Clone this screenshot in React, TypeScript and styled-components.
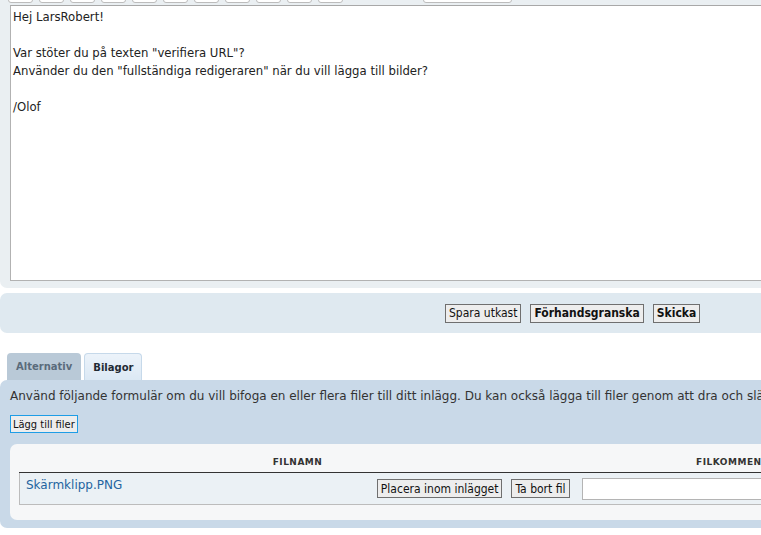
import styled, { createGlobalStyle } from "styled-components";

const GlobalStyle = createGlobalStyle`
  html, body {
    margin: 0;
    padding: 0;
    background: #ffffff;
    overflow: hidden;
  }
  body {
    font-family: "DejaVu Sans", Verdana, sans-serif;
    color: #333;
  }
`;

const Page = styled.div`
  width: 820px;
  display: flex;
  flex-direction: column;
`;

const EditorPanel = styled.div`
  background: #eaeff2;
  border-radius: 0 0 7px 7px;
  padding: 0 0 7px 10px;
  display: flex;
  flex-direction: column;
`;

const Toolbar = styled.div`
  display: flex;
  gap: 6px;
  height: 5px;
  align-items: flex-end;
`;

const ToolButton = styled.div<{ $w?: number; $gap?: number }>`
  width: ${(p) => p.$w ?? 23}px;
  height: 20px;
  margin-bottom: 2px;
  margin-left: ${(p) => p.$gap ?? 0}px;
  background: #ffffff;
  border: 1px solid #bcbcbc;
  border-radius: 3px;
  flex-shrink: 0;
`;

const EditorText = styled.textarea`
  display: block;
  width: 780px;
  height: 276px;
  box-sizing: border-box;
  margin: 0;
  padding: 2px 2px;
  border: 1px solid #b2b2b2;
  border-top-color: #a8a8a8;
  background: #fff;
  resize: none;
  outline: none;
  font-family: "DejaVu Sans Condensed", "DejaVu Sans", sans-serif;
  font-stretch: condensed;
  font-size: 13px;
  line-height: 18px;
  color: #222;
`;

const ActionBar = styled.div`
  margin-top: 5px;
  height: 40px;
  background: #dfe9f0;
  border-radius: 7px;
  display: flex;
  align-items: center;
  padding-left: 445px;
  gap: 9px;
`;

const FormButton = styled.button<{ $bold?: boolean; $small?: boolean }>`
  height: ${(p) => (p.$small ? 18 : 19)}px;
  padding: 0 ${(p) => (p.$small ? 2 : 3)}px;
  margin: 0;
  background: #ededed;
  border: 1px solid ${(p) => (p.$small ? "#1e9de6" : "#6f6f6f")};
  border-radius: 0;
  font-family: "DejaVu Sans Condensed", "DejaVu Sans", sans-serif;
  font-stretch: condensed;
  font-size: ${(p) => (p.$small ? 11 : 12)}px;
  font-weight: ${(p) => (p.$bold ? 700 : 400)};
  color: #111;
  line-height: 1;
  cursor: pointer;
  white-space: nowrap;
`;

const Tabs = styled.div`
  margin-top: 20px;
  display: flex;
  gap: 3px;
  padding-left: 7px;
  align-items: flex-end;
`;

const Tab = styled.div<{ $active?: boolean }>`
  height: ${(p) => (p.$active ? 28 : 27)}px;
  box-sizing: border-box;
  padding: 0 ${(p) => (p.$active ? 8 : 9)}px;
  display: flex;
  align-items: center;
  border-radius: 4px 4px 0 0;
  font-size: 10px;
  font-weight: 700;
  color: ${(p) => (p.$active ? "#1f2a33" : "#5a6b7b")};
  background: ${(p) =>
    p.$active ? "linear-gradient(#ecf3fa, #dbe8f4)" : "#b9c9d7"};
  border: ${(p) => (p.$active ? "1px solid #c6d9ea" : "none")};
  border-bottom: none;
  margin-bottom: ${(p) => (p.$active ? -1 : 0)}px;
`;

const AttachPanel = styled.div`
  background: #c9d9e8;
  border-radius: 7px;
  padding: 8px 0 8px 10px;
  display: flex;
  flex-direction: column;
`;

const Intro = styled.p`
  margin: 0;
  font-size: 12px;
  line-height: 16px;
  color: #333;
  white-space: nowrap;
`;

const AddRow = styled.div`
  margin-top: 11px;
  display: flex;
`;

const FilesBox = styled.div`
  margin-top: 11px;
  background: #f6f7f8;
  border-radius: 7px;
  padding: 8px 0 15px 9px;
`;

const FileTable = styled.table`
  border-collapse: collapse;
  width: 884px;
  font-size: 12px;
`;

const HeadCell = styled.th<{ $w?: number }>`
  width: ${(p) => (p.$w ? `${p.$w}px` : "auto")};
  height: 20px;
  padding: 0;
  font-size: 9px;
  font-weight: 700;
  letter-spacing: 0.5px;
  color: #333;
  text-align: center;
  border-bottom: 1px solid #333;
`;

const FileRow = styled.tr`
  background: #ebf1f5;
  height: 32px;
  border-bottom: 1px solid #bcbcbc;
  border-left: 1px solid #bcbcbc;
`;

const NameCell = styled.td`
  padding: 0 6px;
  vertical-align: middle;
`;

const NameInner = styled.div`
  display: flex;
  align-items: center;
  justify-content: space-between;
`;

const FileLink = styled.a`
  color: #2364a0;
  text-decoration: none;
  font-size: 12px;
  margin-top: -7px;
`;

const ButtonGroup = styled.div`
  display: flex;
  gap: 9px;
`;

const CommentCell = styled.td`
  padding: 0 6px;
  vertical-align: middle;
`;

const CommentInput = styled.input`
  display: block;
  width: 290px;
  height: 22px;
  box-sizing: border-box;
  border: 1px solid #b4b4b4;
  background: #fff;
  margin: 0;
`;

const toolWidths = [23, 23, 23, 23, 23, 23, 23, 23, 23, 23, 23];

export default function App() {
  return (
    <Page>
      <GlobalStyle />
      <EditorPanel>
        <Toolbar>
          {toolWidths.map((w, i) => (
            <ToolButton key={i} $w={w} $gap={i === 0 ? -2 : 0} />
          ))}
          <ToolButton $w={87} $gap={74} />
        </Toolbar>
        <EditorText
          readOnly
          defaultValue={
            'Hej LarsRobert!\n\nVar stöter du på texten "verifiera URL"?\nAnvänder du den "fullständiga redigeraren" när du vill lägga till bilder?\n\n/Olof'
          }
        />
      </EditorPanel>
      <ActionBar>
        <FormButton>Spara utkast</FormButton>
        <FormButton $bold>Förhandsgranska</FormButton>
        <FormButton $bold>Skicka</FormButton>
      </ActionBar>
      <Tabs>
        <Tab>Alternativ</Tab>
        <Tab $active>Bilagor</Tab>
      </Tabs>
      <AttachPanel>
        <Intro>
          Använd följande formulär om du vill bifoga en eller flera filer till
          ditt inlägg. Du kan också lägga till filer genom att dra och släppa
          dem här.
        </Intro>
        <AddRow>
          <FormButton $small>Lägg till filer</FormButton>
        </AddRow>
        <FilesBox>
          <FileTable>
            <thead>
              <tr>
                <HeadCell $w={556}>FILNAMN</HeadCell>
                <HeadCell>FILKOMMENTAR</HeadCell>
              </tr>
            </thead>
            <tbody>
              <FileRow>
                <NameCell>
                  <NameInner>
                    <FileLink href="#">Skärmklipp.PNG</FileLink>
                    <ButtonGroup>
                      <FormButton>Placera inom inlägget</FormButton>
                      <FormButton>Ta bort fil</FormButton>
                    </ButtonGroup>
                  </NameInner>
                </NameCell>
                <CommentCell>
                  <CommentInput type="text" />
                </CommentCell>
              </FileRow>
            </tbody>
          </FileTable>
        </FilesBox>
      </AttachPanel>
    </Page>
  );
}
